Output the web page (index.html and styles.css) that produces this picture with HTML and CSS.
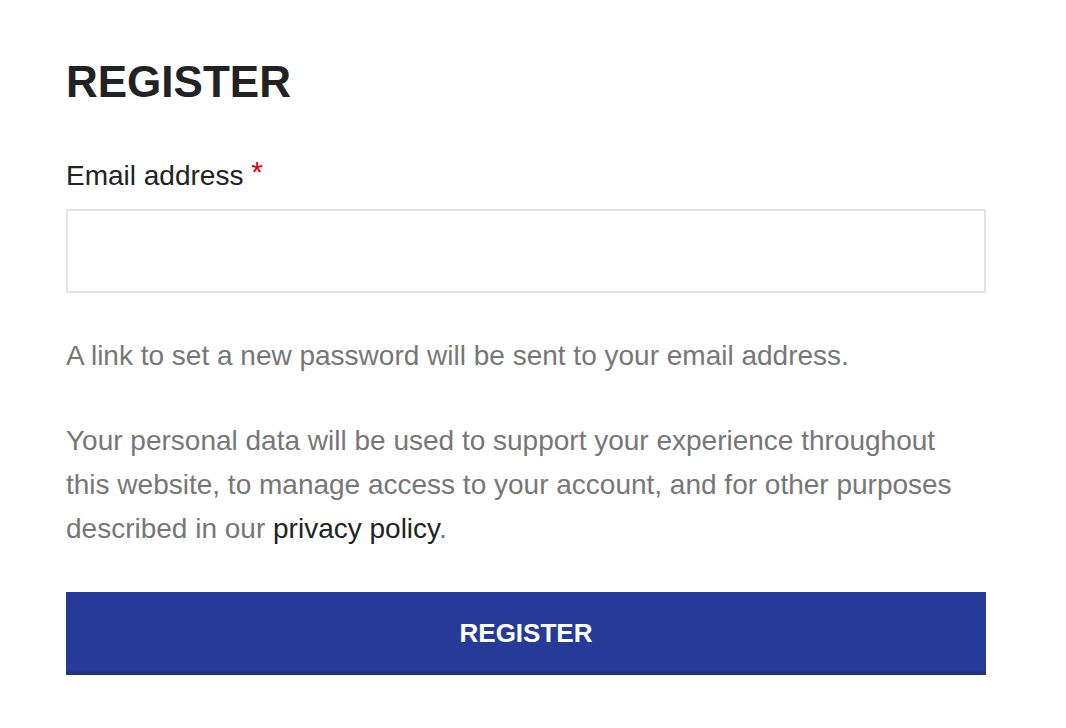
FILE: index.html
```html
<!DOCTYPE html>
<html lang="en">
<head>
<meta charset="utf-8">
<title>Register</title>
<link rel="stylesheet" href="styles.css">
</head>
<body>
<main class="register">
  <h2 class="register-title">REGISTER</h2>
  <form class="register-form">
    <label class="field-label" for="reg_email">Email address <span class="required">*</span></label>
    <input class="field-input" type="email" id="reg_email" name="email">
    <p class="note">A link to set a new password will be sent to your email address.</p>
    <p class="note privacy">Your personal data will be used to support your experience throughout this website, to manage access to your account, and for other purposes described in our <a class="policy-link" href="#">privacy policy</a>.</p>
    <button class="register-button" type="button">REGISTER</button>
  </form>
</main>
</body>
</html>
```
FILE: styles.css
```css
html, body {
  margin: 0;
  padding: 0;
  background: #ffffff;
}

body {
  font-family: "Liberation Sans", Arial, Helvetica, sans-serif;
  color: #222222;
}

.register {
  width: 920px;
  padding: 56px 0 0 66px;
}

.register-title {
  margin: 0;
  font-size: 44px;
  line-height: 52px;
  font-weight: 700;
  color: #222222;
}

.register-form {
  display: flex;
  flex-direction: column;
  margin-top: 46px;
}

.field-label {
  font-size: 28px;
  line-height: 44px;
  height: 44px;
  color: #222222;
}

.required {
  color: #e8000f;
  font-weight: 400;
  font-size: 30px;
  line-height: 0;
  vertical-align: 3px;
}

.field-input {
  box-sizing: border-box;
  width: 920px;
  height: 84px;
  margin: 11px 0 0 0;
  border: 2px solid #e4e4e4;
  background: #ffffff;
  outline: none;
  padding: 0 20px;
  font-size: 28px;
  font-family: inherit;
}

.note {
  margin: 41px 0 0 0;
  max-width: 900px;
  font-size: 28px;
  line-height: 44px;
  color: #777777;
}

.note.privacy {
  margin-top: 41px;
}

.policy-link {
  color: #222222;
  text-decoration: none;
}

.register-button {
  box-sizing: border-box;
  width: 920px;
  height: 83px;
  margin-top: 41px;
  border: 0;
  border-bottom: 4px solid #223381;
  background: #263b97;
  color: #ffffff;
  font-family: inherit;
  font-size: 26px;
  font-weight: 700;
  padding: 4px 0 0 0;
  cursor: pointer;
}
```
